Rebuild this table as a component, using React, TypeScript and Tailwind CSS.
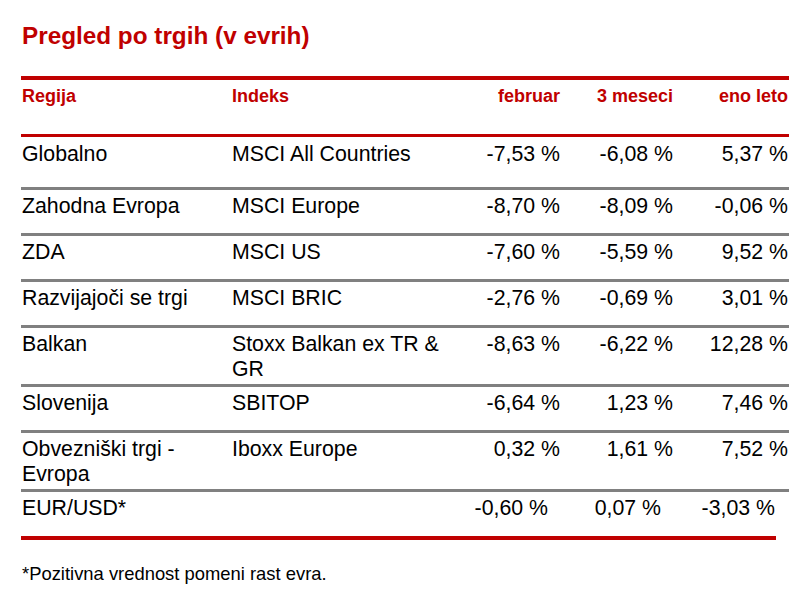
import React from "react";

type Row = { r: string; i: string; a: string; b: string; c: string };

const rows: Row[] = [
  { r: "Zahodna Evropa", i: "MSCI Europe", a: "-8,70 %", b: "-8,09 %", c: "-0,06 %" },
  { r: "ZDA", i: "MSCI US", a: "-7,60 %", b: "-5,59 %", c: "9,52 %" },
  { r: "Razvijajoči se trgi", i: "MSCI BRIC", a: "-2,76 %", b: "-0,69 %", c: "3,01 %" },
  { r: "Balkan", i: "Stoxx Balkan ex TR & GR", a: "-8,63 %", b: "-6,22 %", c: "12,28 %" },
  { r: "Slovenija", i: "SBITOP", a: "-6,64 %", b: "1,23 %", c: "7,46 %" },
  { r: "Obvezniški trgi - Evropa", i: "Iboxx Europe", a: "0,32 %", b: "1,61 %", c: "7,52 %" },
];

export default function App() {
  return (
    <div className="w-[810px] h-[612px] bg-white text-black font-['Liberation_Sans',Arial,sans-serif] overflow-hidden">
      <div className="pl-[21px] pt-[22px]">
        <h1 className="text-[24.3px] leading-[27px] font-bold text-[#c00000] pl-[1px]">
          Pregled po trgih (v evrih)
        </h1>
        <div className="w-[768px] mt-[27px]">
          <div className="grid grid-cols-[210px_215px_115px_113px_115px] h-[61px] border-t-[4px] border-b-[3px] border-[#c00000] pt-[6px] text-[18px] leading-[21px] font-bold text-[#c00000]">
            <div className="pl-[1px]">Regija</div>
            <div className="pl-[1px]">Indeks</div>
            <div className="text-right pr-[1px]">februar</div>
            <div className="text-right pr-[1px]">3 meseci</div>
            <div className="text-right pr-[1px]">eno leto</div>
          </div>
          <div className="grid grid-cols-[210px_215px_115px_113px_115px] min-h-[53px] border-b-[3px] border-[#808080] pt-[5px] text-[21.3px] leading-[25px]">
            <div className="pl-[1px]">Globalno</div>
            <div className="pl-[1px]">MSCI All Countries</div>
            <div className="text-right pr-[1px]">-7,53 %</div>
            <div className="text-right pr-[1px]">-6,08 %</div>
            <div className="text-right pr-[1px]">5,37 %</div>
          </div>
          {rows.map((row) => (
            <div
              key={row.r}
              className="grid grid-cols-[210px_215px_115px_113px_115px] min-h-[46px] border-b-[3px] border-[#808080] pt-[4px] pb-[2px] text-[21.3px] leading-[25px]"
            >
              <div className="pl-[1px]">{row.r}</div>
              <div className="pl-[1px]">{row.i}</div>
              <div className="text-right pr-[1px]">{row.a}</div>
              <div className="text-right pr-[1px]">{row.b}</div>
              <div className="text-right pr-[1px]">{row.c}</div>
            </div>
          ))}
          <div className="grid grid-cols-[210px_215px_103px_113px_114px] w-[755px] h-[48px] border-b-[4px] border-[#c00000] pt-[4px] text-[21.3px] leading-[25px]">
            <div className="pl-[1px]">EUR/USD*</div>
            <div className="pl-[1px]"></div>
            <div className="text-right pr-[1px]">-0,60 %</div>
            <div className="text-right pr-[1px]">0,07 %</div>
            <div className="text-right pr-[1px]">-3,03 %</div>
          </div>
        </div>
        <p className="mt-[23px] text-[18.4px] leading-[21px] pl-[1px]">*Pozitivna vrednost pomeni rast evra.</p>
      </div>
    </div>
  );
}
